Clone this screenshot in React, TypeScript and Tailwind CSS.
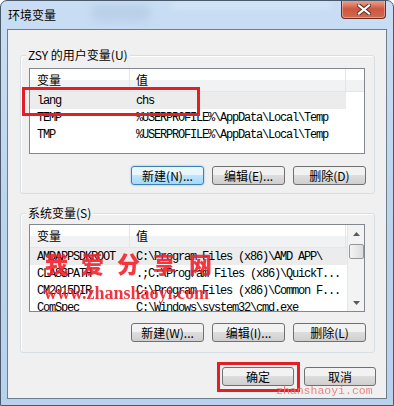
import React from "react";

const cjk = "font-['Noto_Sans_CJK_SC',sans-serif]";
const mono = "font-['Liberation_Mono','Noto_Sans_CJK_SC',monospace]";

function Btn({ label, focused = false, w = "w-[73px]" }: { label: string; focused?: boolean; w?: string }) {
  return (
    <div
      className={`${w} h-[19px] rounded-[3px] border flex items-center justify-center text-[12px] leading-none text-black ${cjk} ${
        focused
          ? "border-[#3c7fb1] bg-gradient-to-b from-[#eaf6fd] from-45% via-[#bee6fd] via-50% to-[#a7d9f5] shadow-[0_0_2px_#66b3e8]"
          : "border-[#707070] bg-gradient-to-b from-[#f2f2f2] from-45% via-[#dddddd] via-50% to-[#cfcfcf]"
      }`}
    >
      <span>{label}</span>
    </div>
  );
}

function Header({ widthRest }: { widthRest: string }) {
  return (
    <div className="flex h-[23px] border-b border-[#e5e5e5] bg-gradient-to-b from-white from-50% to-[#f1f2f4] to-50% shrink-0">
      <div className={`w-[100px] h-full border-r border-[#e3e5e8] pl-[7px] flex items-center text-[12px] ${cjk}`}>变量</div>
      <div className={`${widthRest} h-full border-r border-[#e3e5e8] pl-[6px] flex items-center text-[12px] ${cjk}`}>值</div>
      <div className="flex-1 h-full" />
    </div>
  );
}

function Row({ a, b, sel = false, selW = "w-[316px]" }: { a: string; b: string; sel?: boolean; selW?: string }) {
  return (
    <div className="flex h-[17px] shrink-0">
      <div className={`flex ${selW} h-full ${sel ? "bg-[#ececec]" : ""}`}>
        <div className={`w-[100px] pl-[7px] flex items-center text-[12px] tracking-[-1.2px] text-black whitespace-nowrap overflow-hidden ${mono}`}>{a}</div>
        <div className={`flex-1 pl-[6px] flex items-center text-[12px] tracking-[-1.2px] text-black whitespace-nowrap overflow-hidden ${mono}`}>{b}</div>
      </div>
    </div>
  );
}

function Group({ label, children, h }: { label: string; children: React.ReactNode; h: string }) {
  return (
    <div className={`relative ml-[12px] w-[355px] ${h} rounded-[3px] border border-[#d5dfe5] shadow-[inset_1px_1px_0_#ffffff]`}>
      <div className={`absolute left-[5px] -top-[9px] px-[2px] bg-[#f0f0f0] text-[12px] leading-[16px] text-black ${cjk}`}>{label}</div>
      {children}
    </div>
  );
}

export default function App() {
  return (
    <div className="relative w-[394px] h-[406px] overflow-hidden rounded-t-[7px] border border-[#4b5a6b] bg-gradient-to-b from-[#c9def4] via-[#bcd5ee] to-[#b8d2ed] flex flex-col">
      <div className="absolute left-[90px] top-[4px] w-[60px] h-[16px] rounded-full bg-[#a9c3de] opacity-50 blur-[4px]" />
      <div className="absolute left-[170px] top-[0px] w-[160px] h-[8px] rounded-full bg-[#d8e8f8] opacity-70 blur-[3px]" />
      {/* Title bar */}
      <div className="relative flex h-[28px] shrink-0">
        <div className={`pl-[7px] pt-[6px] text-[12px] leading-[16px] text-black ${cjk}`}>环境变量</div>
        <div className="ml-auto mr-[7px] -mt-px w-[45px] h-[19px] rounded-b-[4px] border border-t-0 border-[#6b2b22] bg-gradient-to-b from-[#e9a99a] from-0% via-[#d0553e] via-50% to-[#cf6a52] flex items-center justify-center shadow-[inset_0_0_0_1px_rgba(255,255,255,0.35)]">
          <svg width="14" height="11" viewBox="0 0 14 11">
            <path d="M2 1.5 L12 9.5 M12 1.5 L2 9.5" stroke="#5b2a22" strokeWidth="4" strokeLinecap="square" />
            <path d="M2 1.5 L12 9.5 M12 1.5 L2 9.5" stroke="#ffffff" strokeWidth="2.2" strokeLinecap="square" />
          </svg>
        </div>
      </div>

      {/* Content */}
      <div className="ml-[6px] w-[380px] h-[370px] border border-[#6f7e8e] bg-[#f0f0f0] flex flex-col shrink-0">
        <div className="mt-[25px]">
          <Group label="ZSY 的用户变量(U)" h="h-[139px]">
            <div className="pt-[12px] pl-[8px]">
              <div className="w-[336px] h-[86px] border border-[#828790] bg-white flex flex-col overflow-hidden">
                <Header widthRest="w-[216px]" />
                <Row a="lang" b="chs" sel />
                <Row a="TEMP" b="%USERPROFILE%\AppData\Local\Temp" />
                <Row a="TMP" b="%USERPROFILE%\AppData\Local\Temp" />
              </div>
            </div>
            <div className="mt-[12px] pr-[8px] flex justify-end gap-[8px]">
              <Btn label="新建(N)..." focused />
              <Btn label="编辑(E)..." />
              <Btn label="删除(D)" />
            </div>
          </Group>
        </div>

        <div className="mt-[19px]">
          <Group label="系统变量(S)" h="h-[140px]">
            <div className="pt-[10px] pl-[8px]">
              <div className="w-[336px] h-[88px] border border-[#828790] bg-white flex overflow-hidden">
                <div className="flex-1 flex flex-col overflow-hidden">
                  <Header widthRest="w-[216px]" />
                  <Row a="AMDAPPSDKROOT" b="C:\Program Files (x86)\AMD APP\" sel selW="w-full" />
                  <Row a="CLASSPATH" b=".;C:\Program Files (x86)\QuickT..." />
                  <Row a="CM2015DIR" b="C:\Program Files (x86)\Common F..." />
                  <Row a="ComSpec" b="C:\Windows\system32\cmd.exe" />
                </div>
                <div className="w-[17px] h-full bg-[#f3f3f3] border-l border-[#e6e6e6] flex flex-col items-center">
                  <div className="h-[17px] w-full flex items-center justify-center">
                    <svg width="7" height="4" viewBox="0 0 7 4"><path d="M0 4 L3.5 0 L7 4 Z" fill="#5a5a5a" /></svg>
                  </div>
                  <div className="mt-[2px] w-[15px] h-[15px] rounded-[2px] border border-[#979797] bg-gradient-to-r from-[#f4f4f4] to-[#dcdcdc]" />
                  <div className="flex-1" />
                  <div className="h-[17px] w-full flex items-center justify-center">
                    <svg width="7" height="4" viewBox="0 0 7 4"><path d="M0 0 L3.5 4 L7 0 Z" fill="#5a5a5a" /></svg>
                  </div>
                </div>
              </div>
            </div>
            <div className="mt-[11px] pr-[8px] flex justify-end gap-[8px]">
              <Btn label="新建(W)..." />
              <Btn label="编辑(I)..." />
              <Btn label="删除(L)" />
            </div>
          </Group>
        </div>

        <div className="mt-[14px] pr-[10px] flex justify-end gap-[10px]">
          <Btn label="确定" w="w-[72px]" />
          <Btn label="取消" w="w-[72px]" />
        </div>
      </div>

      {/* overlays: red highlight boxes */}
      <div className="absolute left-[21px] top-[86px] w-[178px] h-[29px] border-[3px] border-[#e41e26]" />
      <div className="absolute left-[216px] top-[361px] w-[83px] h-[30px] border-[3px] border-[#e41e26]" />

      {/* watermarks */}
      <div className={`absolute left-[44px] top-[248px] text-[23px] leading-[28px] font-black tracking-[13px] text-[#f5222d] opacity-90 ${cjk}`}>我爱分享网</div>
      <div className="absolute left-[43px] top-[281px] text-[18px] leading-[22px] font-bold text-[#f0202c] opacity-90 font-['Liberation_Serif',serif]">www.zhanshaoyi.com</div>
      <div className="absolute left-[275px] top-[383px] text-[11.5px] leading-[14px] text-[#e97a78] opacity-90 font-['Liberation_Mono',monospace]">zhanshaoyi.com</div>
    </div>
  );
}
